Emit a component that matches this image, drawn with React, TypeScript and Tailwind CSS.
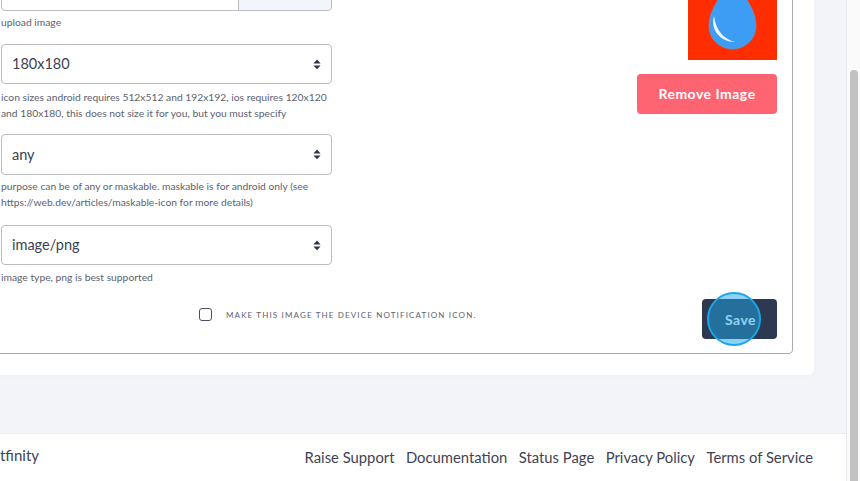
import React from "react";

function Sort() {
  return (
    <svg width="8" height="11" viewBox="0 0 8 11" aria-hidden="true">
      <path d="M4 0.6 L7.6 4.4 H0.4 Z M0.4 6.4 H7.6 L4 10.2 Z" fill="#2d3748" />
    </svg>
  );
}

function Select({ value, h = "h-10" }: { value: string; h?: string }) {
  return (
    <div className={`${h} w-[331px] flex items-center justify-between pl-[10px] pr-[10px] bg-white border border-[#b9bcc3] rounded-[4px] text-[14.5px] text-[#3b4256]`}>
      <span>{value}</span>
      <Sort />
    </div>
  );
}

function Help({ children, cls = "" }: { children: React.ReactNode; cls?: string }) {
  return <p className={`text-[10.3px] leading-[16px] text-[#5d6270] ${cls}`}>{children}</p>;
}

export default function App() {
  return (
    <div className="w-[860px] h-[481px] overflow-hidden flex bg-[#f3f4f9] font-['Lato',sans-serif]">
      <div className="w-[847px] h-full flex flex-col border-r border-[#e8e9ee]">
        <div className="h-[433px] shrink-0 overflow-hidden">
          <div className="w-[854px] -ml-[40px] -mt-[40px] h-[415px] bg-white rounded-br-[6px] pr-[21px] pb-[21px] shadow-[0_1px_6px_rgba(0,0,0,0.02)]">
            <div className="h-full border border-[#a9abb0] rounded-br-[4px] flex flex-col">
              <div className="flex flex-1">
                <div className="pl-[40px] w-[400px] shrink-0">
                  <div className="w-[331px] h-[50px] border border-[#b9bcc3] rounded-b-[4px] flex justify-end bg-white">
                    <div className="w-[93px] border-l border-[#b9bcc3] bg-[#f3f5fc] rounded-br-[4px]" />
                  </div>
                  <Help cls="mt-[3px]">upload image</Help>
                  <div className="mt-[14px]"><Select value="180x180" /></div>
                  <Help cls="mt-[5px]">icon sizes android requires 512x512 and 192x192, ios requires 120x120<br />and 180x180, this does not size it for you, but you must specify</Help>
                  <div className="mt-[13px]"><Select value="any" h="h-[41px]" /></div>
                  <Help cls="mt-[3px]">purpose can be of any or maskable. maskable is for android only (see<br />https://web.dev/articles/maskable-icon for more details)</Help>
                  <div className="mt-[15px]"><Select value="image/png" /></div>
                  <Help cls="mt-[4px]">image type, png is best supported</Help>
                </div>
                <div className="flex-1 flex flex-col items-end pr-[15px]">
                  <svg className="shrink-0 mb-[14px]" width="89" height="99" viewBox="0 0 89 99" aria-hidden="true">
                    <rect width="89" height="99" fill="#ff2e00" />
                    <path d="M44.5 8 C 42 30 21 42 21 65 C 21 78 32 88 44.5 88 C 57 88 68 78 68 65 C 68 42 47 30 44.5 8 Z" fill="#3d9df5" stroke="#6f8fc0" strokeWidth="0.8" />
                    <path d="M26 55 C 22 68 32 81 47 81 C 36 78 28 70 26 55 Z" fill="#eef6fd" />
                  </svg>
                  <button className="w-[140px] h-10 pb-[2px] rounded-[4px] bg-[#fe6472] text-white text-[14px] font-bold tracking-[0.5px]">Remove Image</button>
                </div>
              </div>
              <div className="flex items-start justify-between pl-[238px] pr-[15px] pb-[14px]">
                <div className="flex items-center gap-[14px] mt-[9px]">
                  <span className="w-[13px] h-[13px] rounded-[3px] border border-[#4b5060] bg-white" />
                  <span className="text-[8px] uppercase tracking-[1.15px] text-[#5d6270]">Make this image the device notification icon.</span>
                </div>
                <button className="relative w-[75px] h-10 rounded-[4px] bg-[#2c3950] text-white text-[14px] font-bold tracking-[0.5px] pl-[2px]">
                  Save
                  <span className="absolute left-[5px] top-[-7px] w-[54px] h-[54px] rounded-full border-2 border-[#1ba6e8] bg-[#1ba6e8]/50" />
                </button>
              </div>
            </div>
          </div>
        </div>
        <div className="h-[48px] shrink-0 bg-white flex items-center justify-between pr-[33px] text-[14.8px] text-[#3f4354] border-t border-[#ececf1]">
          <span className="-ml-[18px] -mt-[4px] text-[15px]">Botfinity</span>
          <nav className="flex gap-[11.5px]">
            <a>Raise Support</a>
            <a>Documentation</a>
            <a>Status Page</a>
            <a>Privacy Policy</a>
            <a>Terms of Service</a>
          </nav>
        </div>
      </div>
      <div className="flex-1 pt-[70px] flex justify-center bg-[#fafafa]">
        <div className="w-[8px] h-full rounded-t-[4px] bg-[#c1c1c1]" />
      </div>
    </div>
  );
}
